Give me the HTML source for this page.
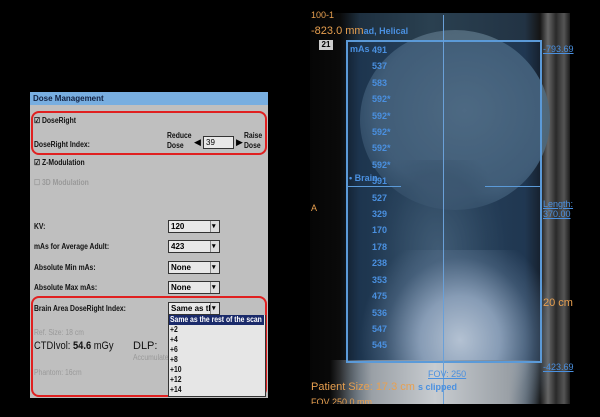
<!DOCTYPE html><html><head><style>
body{margin:0;width:600px;height:417px;background:#000;position:relative;overflow:hidden;font-family:"Liberation Sans",sans-serif}
.a{position:absolute}
.p{left:30px;top:92px;width:238px;height:306px;background:#bfbfbf}
.hd{left:30px;top:92px;width:238px;height:13px;background:#78aee0;font-size:8px;font-weight:bold;color:#102040;line-height:13px;text-indent:3px}
.l{font-size:8px;font-weight:bold;color:#111;transform:scaleX(.85);transform-origin:left}
.sel{width:50px;height:11px;background:#e8e8e8;border:1px solid #333;font-size:8px;font-weight:bold;line-height:11px;text-indent:2px}
.sel:after{content:"▾";position:absolute;right:0;top:0;width:8px;height:11px;background:#ddd;border-left:1px solid #888;font-size:7px;text-indent:1px}
.rb{border:2px solid #e02020;border-radius:8px}
.o{color:#e8a050;font-size:9px}
.b{color:#4a90e0;font-size:9px;font-weight:bold}
</style></head><body>
<div class="a p"></div>
<div class="a hd">Dose Management</div>
<div class="a rb" style="left:31px;top:111px;width:232px;height:40px"></div>
<div class="a l" style="left:34px;top:116px">☑ DoseRight</div>
<div class="a l" style="left:34px;top:140px">DoseRight Index:</div>
<div class="a l" style="left:167px;top:131px;line-height:10px">Reduce<br>Dose</div>
<div class="a" style="left:194px;top:137px;font-size:9px">◀</div>
<div class="a" style="left:203px;top:136px;width:29px;height:11px;background:#e8e8e8;border:1px solid #333;font-size:8px;line-height:11px;text-indent:2px">39</div>
<div class="a" style="left:236px;top:137px;font-size:9px">▶</div>
<div class="a l" style="left:244px;top:131px;line-height:10px">Raise<br>Dose</div>
<div class="a l" style="left:34px;top:158px">☑ Z-Modulation</div>
<div class="a l" style="left:34px;top:178px;color:#999">☐ 3D Modulation</div>
<div class="a l" style="left:34px;top:222px">KV:</div>
<div class="a sel" style="left:168px;top:220px">120</div>
<div class="a l" style="left:34px;top:242px">mAs for Average Adult:</div>
<div class="a sel" style="left:168px;top:240px">423</div>
<div class="a l" style="left:34px;top:263px">Absolute Min mAs:</div>
<div class="a sel" style="left:168px;top:261px">None</div>
<div class="a l" style="left:34px;top:283px">Absolute Max mAs:</div>
<div class="a sel" style="left:168px;top:281px">None</div>
<div class="a rb" style="left:31px;top:296px;width:232px;height:97px"></div>
<div class="a l" style="left:34px;top:304px">Brain Area DoseRight Index:</div>
<div class="a sel" style="left:168px;top:302px">Same as the</div>
<div class="a l" style="left:34px;top:328px;color:#999;font-weight:normal">Ref. Size: 18 cm</div>
<div class="a" style="left:34px;top:340px;font-size:11px;color:#111;transform:scaleX(.85);transform-origin:left">CTDIvol: <b>54.6</b> mGy</div>
<div class="a" style="left:133px;top:340px;font-size:11px;color:#111">DLP:</div>
<div class="a l" style="left:133px;top:353px;color:#999;font-weight:normal">Accumulate</div>
<div class="a l" style="left:34px;top:368px;color:#999;font-weight:normal">Phantom: 16cm</div>
<div class="a" style="left:168px;top:315px;width:96px;height:81px;background:#e6e6e6;border:1px solid #333;border-top:none"></div>
<div class="a" style="left:169px;top:315px;width:95px;height:10px;background:#1a2a6a"></div>
<div class="a l" style="left:170px;top:315px;color:#fff;line-height:10px">Same as the rest of the scan</div>
<div class="a l" style="left:170px;top:325px;line-height:10px">+2<br>+4<br>+6<br>+8<br>+10<br>+12<br>+14</div>

<div class="a" style="left:310px;top:13px;width:260px;height:391px;background:linear-gradient(90deg,#050505 0,#0a0a0a 30px,#1e3040 50px,#2a4050 120px,#223344 215px,#151515 230px,#666 238px,#2a2a2a 246px,#555 254px,#1a1a1a 260px)"></div>
<div class="a" style="left:360px;top:30px;width:190px;height:180px;border-radius:50%;background:radial-gradient(ellipse at 55% 45%,#607888,#4e6678 60%,rgba(60,85,105,.3) 85%,transparent 100%)"></div>
<div class="a" style="left:358px;top:160px;width:180px;height:200px;background:radial-gradient(ellipse 70px 110px at 80px 90px,#4e6474,rgba(60,80,95,.4) 70%,transparent)"></div>
<div class="a" style="left:350px;top:250px;width:200px;height:154px;background:radial-gradient(ellipse 100px 110px at 110px 90px,#eef2f6,#b0bece 40%,rgba(110,130,150,.5) 75%,transparent)"></div>
<div class="a" style="left:330px;top:360px;width:210px;height:44px;background:linear-gradient(90deg,transparent,#9aa0a6 20%,#c8ccd0 50%,#9aa0a6 85%,transparent)"></div>
<div class="a" style="left:346px;top:40px;width:192px;height:319px;border:2px solid #5b9ad8;background:rgba(30,70,120,.28)"></div>
<div class="a" style="left:443px;top:15px;width:1px;height:389px;background:#6aa0d8"></div>
<div class="a" style="left:346px;top:186px;width:55px;height:1px;background:#5b9ad8"></div>
<div class="a" style="left:485px;top:186px;width:55px;height:1px;background:#5b9ad8"></div>
<div class="a o" style="left:311px;top:10px">100-1</div>
<div class="a o" style="left:311px;top:25px;font-size:11px">-823.0 mm<span class="b" style="font-size:9px">ad, Helical</span></div>
<div class="a" style="left:319px;top:40px;width:14px;height:10px;background:#ccc;font-size:8px;font-weight:bold;text-align:center">21</div>
<div class="a b" style="left:350px;top:44px">mAs</div>
<div class="a b" style="left:372px;top:42px;line-height:16.4px">491<br>537<br>583<br>592*<br>592*<br>592*<br>592*<br>592*<br>591<br>527<br>329<br>170<br>178<br>238<br>353<br>475<br>536<br>547<br>545</div>
<div class="a b" style="left:349px;top:173px">• Brain</div>
<div class="a b" style="left:543px;top:44px;text-decoration:underline;font-weight:normal">-793.69</div>
<div class="a b" style="left:543px;top:199px;text-decoration:underline;font-weight:normal">Length:<br>370.00</div>
<div class="a o" style="left:543px;top:297px;font-size:11px">20 cm</div>
<div class="a b" style="left:543px;top:362px;text-decoration:underline;font-weight:normal">-423.69</div>
<div class="a o" style="left:311px;top:203px">A</div>
<div class="a b" style="left:428px;top:369px;text-decoration:underline;font-weight:normal">FOV: 250</div>
<div class="a o" style="left:311px;top:381px;font-size:11px">Patient Size: 17.3 cm <span class="b">s clipped</span></div>
<div class="a o" style="left:311px;top:397px;font-size:9px">FOV 250.0 mm</div>
<div class="a" style="left:300px;top:404px;width:300px;height:13px;background:#000"></div>
</body></html>
